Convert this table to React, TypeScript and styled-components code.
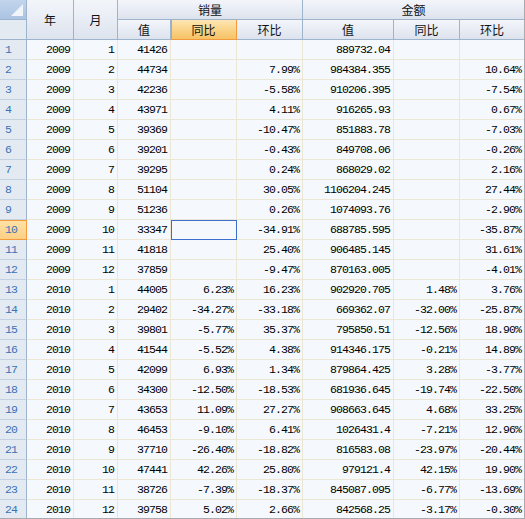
import React from "react";
import styled, { createGlobalStyle, css } from "styled-components";

const Global = createGlobalStyle`
  html, body { margin: 0; padding: 0; background: #ffffff; }
  #root { width: 525px; height: 519px; }
`;

const COLS = "27px 47px 44px 53px 66px 66px 91px 66px 65px";

const Frame = styled.div`
  width: 525px;
  height: 519px;
  overflow: hidden;
  box-sizing: border-box;
  border-right: 1px solid #a7abb0;
  border-bottom: 1px solid #a7abb0;
  background: #f5f9fe;
`;

const Grid = styled.div`
  display: grid;
  grid-template-columns: ${COLS};
  grid-auto-rows: 20px;
  font-family: "Liberation Mono", "DejaVu Sans Mono", monospace;
  font-size: 11.5px;
  letter-spacing: -0.9px;
  color: #000;
`;

const headerBg = css`
  background: linear-gradient(to bottom, #f3f5fa 0%, #e9edf5 45%, #dde3ed 100%);
`;

const Corner = styled.div`
  grid-row: 1 / span 2;
  grid-column: 1;
  box-sizing: border-box;
  border-right: 1px solid #9db4cc;
  border-bottom: 1px solid #9db4cc;
  display: flex;
  flex-direction: column;
`;

const CornerTop = styled.div`
  height: 19px;
  position: relative;
  background: linear-gradient(to bottom, #c2d5ec, #abc4e3);
  border-bottom: 1px solid #9db4cc;
`;

const Triangle = styled.div`
  position: absolute;
  right: 3px;
  bottom: 3px;
  width: 0;
  height: 0;
  border-left: 12px solid transparent;
  border-bottom: 12px solid #f1f4f8;
`;

const CornerBottom = styled.div`
  flex: 1;
  background: #e4eaf2;
`;

const HeaderCell = styled.div<{ $col: string; $row: string; $sel?: boolean }>`
  grid-column: ${(p) => p.$col};
  grid-row: ${(p) => p.$row};
  box-sizing: border-box;
  border-right: 1px solid #9db4cc;
  border-bottom: 1px solid #9db4cc;
  ${headerBg};
  display: flex;
  align-items: center;
  justify-content: center;
  font-family: "Noto Sans CJK SC", "Noto Sans", sans-serif;
  font-size: 12px;
  letter-spacing: 0;
  color: #111;
  ${(p) =>
    p.$sel &&
    css`
      background: linear-gradient(to bottom, #fde6b4 0%, #fad489 50%, #f6c266 100%);
      border-right-color: #f29a3c;
      border-bottom-color: #f29a3c;
      box-shadow: inset 1px 0 0 #f29a3c;
    `}
`;

const RowHeader = styled.div<{ $sel?: boolean }>`
  grid-column: 1;
  box-sizing: border-box;
  border-right: 1px solid #9db4cc;
  border-bottom: 1px solid #c3d1e0;
  background: #e4eaf2;
  color: #3a72b4;
  display: flex;
  align-items: center;
  padding-left: 5px;
  ${(p) =>
    p.$sel &&
    css`
      background: linear-gradient(to bottom, #ffe2a8, #fdd084);
      border-right-color: #f29a3c;
      border-bottom-color: #f29a3c;
      box-shadow: inset 0 1px 0 #f29a3c;
    `}
`;

const Cell = styled.div<{ $sel?: boolean }>`
  box-sizing: border-box;
  border-right: 1px solid #ece6d5;
  border-bottom: 1px solid #ece6d5;
  background: #f5f9fe;
  display: flex;
  align-items: center;
  justify-content: flex-end;
  padding-right: 3px;
  white-space: nowrap;
  overflow: hidden;
  ${(p) =>
    p.$sel &&
    css`
      border-right-color: #3c6fcd;
      border-bottom-color: #3c6fcd;
      box-shadow: inset 1px 1px 0 #3c6fcd;
    `}
`;

type Row = [number, number, string, string, string, string, string, string];

const rows: Row[] = [
  [2009, 1, "41426", "", "", "889732.04", "", ""],
  [2009, 2, "44734", "", "7.99%", "984384.355", "", "10.64%"],
  [2009, 3, "42236", "", "-5.58%", "910206.395", "", "-7.54%"],
  [2009, 4, "43971", "", "4.11%", "916265.93", "", "0.67%"],
  [2009, 5, "39369", "", "-10.47%", "851883.78", "", "-7.03%"],
  [2009, 6, "39201", "", "-0.43%", "849708.06", "", "-0.26%"],
  [2009, 7, "39295", "", "0.24%", "868029.02", "", "2.16%"],
  [2009, 8, "51104", "", "30.05%", "1106204.245", "", "27.44%"],
  [2009, 9, "51236", "", "0.26%", "1074093.76", "", "-2.90%"],
  [2009, 10, "33347", "", "-34.91%", "688785.595", "", "-35.87%"],
  [2009, 11, "41818", "", "25.40%", "906485.145", "", "31.61%"],
  [2009, 12, "37859", "", "-9.47%", "870163.005", "", "-4.01%"],
  [2010, 1, "44005", "6.23%", "16.23%", "902920.705", "1.48%", "3.76%"],
  [2010, 2, "29402", "-34.27%", "-33.18%", "669362.07", "-32.00%", "-25.87%"],
  [2010, 3, "39801", "-5.77%", "35.37%", "795850.51", "-12.56%", "18.90%"],
  [2010, 4, "41544", "-5.52%", "4.38%", "914346.175", "-0.21%", "14.89%"],
  [2010, 5, "42099", "6.93%", "1.34%", "879864.425", "3.28%", "-3.77%"],
  [2010, 6, "34300", "-12.50%", "-18.53%", "681936.645", "-19.74%", "-22.50%"],
  [2010, 7, "43653", "11.09%", "27.27%", "908663.645", "4.68%", "33.25%"],
  [2010, 8, "46453", "-9.10%", "6.41%", "1026431.4", "-7.21%", "12.96%"],
  [2010, 9, "37710", "-26.40%", "-18.82%", "816583.08", "-23.97%", "-20.44%"],
  [2010, 10, "47441", "42.26%", "25.80%", "979121.4", "42.15%", "19.90%"],
  [2010, 11, "38726", "-7.39%", "-18.37%", "845087.095", "-6.77%", "-13.69%"],
  [2010, 12, "39758", "5.02%", "2.66%", "842568.25", "-3.17%", "-0.30%"],
];

const SEL_ROW = 9;
const SEL_COL = 3;

export default function App() {
  return (
    <>
      <Global />
      <Frame>
        <Grid>
          <Corner>
            <CornerTop>
              <Triangle />
            </CornerTop>
            <CornerBottom />
          </Corner>
          <HeaderCell $col="2" $row="1 / span 2">年</HeaderCell>
          <HeaderCell $col="3" $row="1 / span 2">月</HeaderCell>
          <HeaderCell $col="4 / span 3" $row="1">销量</HeaderCell>
          <HeaderCell $col="7 / span 3" $row="1">金额</HeaderCell>
          <HeaderCell $col="4" $row="2">值</HeaderCell>
          <HeaderCell $col="5" $row="2" $sel>同比</HeaderCell>
          <HeaderCell $col="6" $row="2">环比</HeaderCell>
          <HeaderCell $col="7" $row="2">值</HeaderCell>
          <HeaderCell $col="8" $row="2">同比</HeaderCell>
          <HeaderCell $col="9" $row="2">环比</HeaderCell>
          {rows.map((r, i) => (
            <React.Fragment key={i}>
              <RowHeader $sel={i === SEL_ROW}>{i + 1}</RowHeader>
              {r.map((v, j) => (
                <Cell key={j} $sel={i === SEL_ROW && j === SEL_COL}>
                  {v}
                </Cell>
              ))}
            </React.Fragment>
          ))}
        </Grid>
      </Frame>
    </>
  );
}
